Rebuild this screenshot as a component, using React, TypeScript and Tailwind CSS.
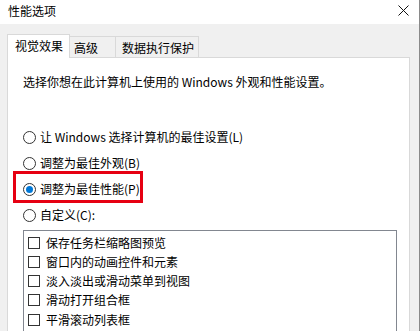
import React from 'react';

const font = { fontFamily: '"Noto Sans CJK SC", "Noto Sans", sans-serif' };

const radios = [
  { label: '让 Windows 选择计算机的最佳设置(L)', checked: false },
  { label: '调整为最佳外观(B)', checked: false },
  { label: '调整为最佳性能(P)', checked: true },
  { label: '自定义(C):', checked: false },
];

const options = [
  '保存任务栏缩略图预览',
  '窗口内的动画控件和元素',
  '淡入淡出或滑动菜单到视图',
  '滑动打开组合框',
  '平滑滚动列表框',
];

const Radio = ({ checked }: { checked: boolean }) => (
  <span className="flex h-[13px] w-[13px] shrink-0 items-center justify-center rounded-full border border-[#333] bg-white">
    {checked && <span className="h-[7px] w-[7px] rounded-full bg-[#0078d7]" />}
  </span>
);

const App = () => (
  <div
    className="relative h-[331px] w-[420px] overflow-hidden border-r border-[#8a8a8a] bg-[#f0f0f0] text-[12px] leading-[16px] text-black"
    style={font}
  >
    {/* title bar */}
    <div className="flex h-[24px] items-center justify-between bg-white pl-[8px] pr-[10px]">
      <span className="-mt-[2px]">性能选项</span>
      <svg width="11" height="11" viewBox="0 0 11 11" className="-mt-[4px]">
        <path d="M0.5 0.5 L10.5 10.5 M10.5 0.5 L0.5 10.5" stroke="#111" strokeWidth="1" />
      </svg>
    </div>

    <div className="pl-[7px] pr-[9px] pt-[10px]">
      {/* tabs */}
      <div className="relative z-10 -mb-px flex items-end">
        <div className="h-[24px] w-[63px] border border-b-0 border-[#d9d9d9] bg-white pl-[7px] pt-[3px]">
          视觉效果
        </div>
        <div className="h-[22px] w-[46px] border border-l-0 border-[#d9d9d9] border-b-[#d9d9d9] pl-[4px] pt-[3px]">
          高级
        </div>
        <div className="h-[22px] w-[83px] border border-l-0 border-[#d9d9d9] pl-[6px] pt-[3px]">
          数据执行保护
        </div>
      </div>

      {/* panel */}
      <div className="h-[300px] w-[403px] border border-[#d9d9d9] bg-white pl-[15px] pt-[16px]">
        <div>选择你想在此计算机上使用的 Windows 外观和性能设置。</div>

        <div className="mt-[34px] flex flex-col">
          {radios.map((r) => (
            <div key={r.label} className="flex h-[26px] items-center gap-[4px]">
              <Radio checked={r.checked} />
              <span>{r.label}</span>
            </div>
          ))}
        </div>

        <div className="mt-[2px] w-[374px] border border-[#828790] bg-white pt-[2px]">
          {options.map((o) => (
            <div key={o} className="flex h-[19.25px] items-center gap-[6px] pl-[4px]">
              <span className="h-[12px] w-[12px] shrink-0 border border-[#333] bg-white" />
              <span>{o}</span>
            </div>
          ))}
          <div className="h-[40px]" />
        </div>
      </div>
    </div>

    {/* highlight */}
    <div className="absolute left-[13px] top-[171px] h-[32px] w-[130px] border-[3px] border-[#e60012]" />
  </div>
);

export default App;
